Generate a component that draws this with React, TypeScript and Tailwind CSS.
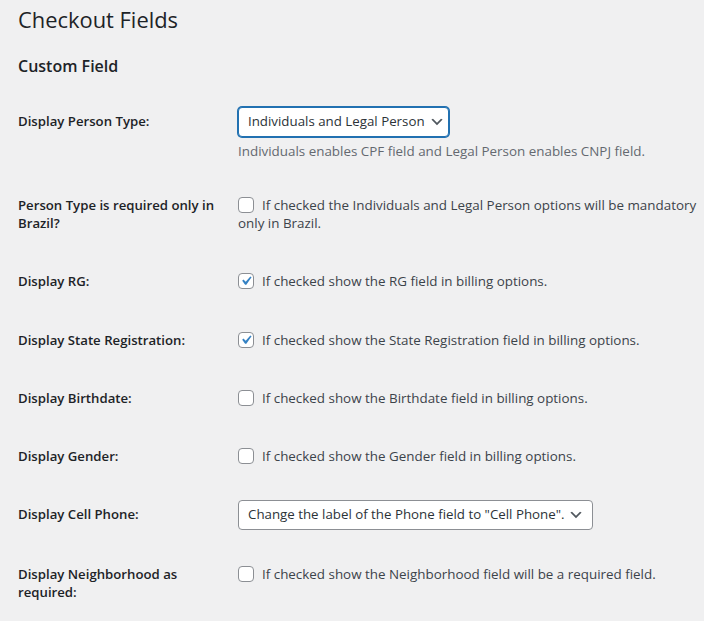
import React from 'react';

const font = { fontFamily: '"Open Sans", "Noto Sans", sans-serif' };

const Chevron = () => (
  <svg width="16" height="16" viewBox="0 0 20 20" className="shrink-0">
    <path d="M5 6l5 5 5-5 2 1-7 7-7-7 2-1z" fill="#50575e" />
  </svg>
);

const Checkbox = ({ checked }: { checked?: boolean }) => (
  <span className="mt-[1px] mr-2 inline-flex h-4 w-4 shrink-0 items-center justify-center rounded-[4px] border border-[#8c8f94] bg-white align-top">
    {checked && (
      <svg width="18" height="18" viewBox="0 0 20 20" className="-m-[2px]">
        <path d="M14.83 4.89l1.34.94-5.81 8.38H9.02L5.78 9.67l1.34-1.25 2.57 2.4z" fill="#3582c4" />
      </svg>
    )}
  </span>
);

const Select = ({ label, focused, width = '' }: { label: string; focused?: boolean; width?: string }) => (
  <div
    className={`inline-flex h-[30px] items-center justify-between gap-1 rounded-[4px] border bg-white pl-[9px] pr-2 text-[13.3px] text-[#2c3338] ${width} ${
      focused ? 'border-[#2271b1] shadow-[0_0_0_1px_#2271b1]' : 'border-[#8c8f94]'
    }`}
  >
    <span className="whitespace-nowrap">{label}</span>
    <Chevron />
  </div>
);

const Row = ({ label, children, pad = 'py-[15px]' }: { label: React.ReactNode; children: React.ReactNode; pad?: string }) => (
  <div className="flex">
    <div className="w-[220px] shrink-0 whitespace-nowrap py-5 pr-5 text-[13.2px] font-semibold leading-[18.2px] text-[#1d2327]">
      {label}
    </div>
    <div className={`flex-1 pr-2 ${pad}`}>{children}</div>
  </div>
);

const CheckRow = ({ label, text, checked }: { label: React.ReactNode; text: React.ReactNode; checked?: boolean }) => (
  <Row label={label} pad="py-5">
    <div className="flex items-start text-[13.4px] leading-[18.2px] text-[#3c434a]">
      <Checkbox checked={checked} />
      <span>{text}</span>
    </div>
  </Row>
);

export default function App() {
  return (
    <div className="min-h-[621px] bg-[#f0f0f1] pl-[18px]" style={font}>
      <h1 className="pt-[5px] pb-[4px] text-[21.9px] font-normal leading-[30px] text-[#1d2327]">Checkout Fields</h1>
      <h2 className="mt-[15px] mb-[14px] text-[16px] font-semibold leading-[24px] text-[#1d2327]">Custom Field</h2>

      <Row label="Display Person Type:">
        <Select label="Individuals and Legal Person" focused width="w-[211px]" />
        <p className="mt-1 text-[13.4px] leading-[20px] text-[#646970]">
          Individuals enables CPF field and Legal Person enables CNPJ field.
        </p>
      </Row>

      <Row label={<>Person Type is required only in<br />Brazil?</>} pad="py-5">
        <div className="text-[13.4px] leading-[18.2px] text-[#3c434a]">
          <span className="whitespace-nowrap">
            <Checkbox />
            If checked the Individuals and Legal Person options will be mandatory
          </span>
          <br />
          only in Brazil.
        </div>
      </Row>

      <CheckRow label="Display RG:" text="If checked show the RG field in billing options." checked />
      <CheckRow
        label="Display State Registration:"
        text="If checked show the State Registration field in billing options."
        checked
      />
      <CheckRow label="Display Birthdate:" text="If checked show the Birthdate field in billing options." />
      <CheckRow label="Display Gender:" text="If checked show the Gender field in billing options." />

      <Row label="Display Cell Phone:">
        <Select label='Change the label of the Phone field to "Cell Phone".' />
      </Row>

      <CheckRow
        label={<>Display Neighborhood as<br />required:</>}
        text="If checked show the Neighborhood field will be a required field."
      />
    </div>
  );
}
